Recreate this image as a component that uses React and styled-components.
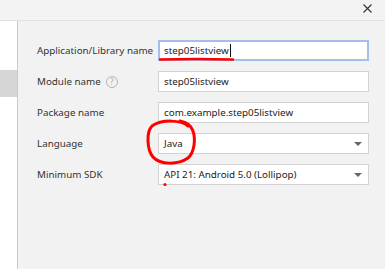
import { Fragment } from "react";
import styled, { createGlobalStyle } from "styled-components";

const Global = createGlobalStyle`
  html, body { margin: 0; padding: 0; }
  body {
    width: 385px;
    height: 269px;
    overflow: hidden;
    font-family: "Noto Sans", "Open Sans", sans-serif;
    color: #333;
  }
`;

const Window = styled.div`
  position: relative;
  width: 385px;
  height: 269px;
  display: flex;
  flex-direction: column;
  background: #f2f2f2;
`;

const TitleBar = styled.div`
  height: 20px;
  flex: none;
  display: flex;
  align-items: center;
  justify-content: flex-end;
  padding-right: 13px;
  background: #f3f3f3;
  border-bottom: 1px solid #e1e1e1;
`;

const CloseButton = styled.button`
  border: 0;
  padding: 0;
  background: none;
  width: 9px;
  height: 9px;
  margin-top: -3px;
  display: flex;
  svg { display: block; }
`;

const Body = styled.div`
  flex: 1;
  display: flex;
`;

const Sidebar = styled.div`
  width: 17px;
  flex: none;
  background: #fff;
  border-right: 1px solid #cacaca;
  padding-top: 49px;
`;

const SideItem = styled.div`
  height: 27px;
  background: ${({ $selected }) => ($selected ? "#d6d6d6" : "transparent")};
`;

const Content = styled.div`
  flex: 1;
  padding: 19px 0 0 19px;
`;

const Form = styled.div`
  display: grid;
  grid-template-columns: 121px 211px;
  grid-auto-rows: 21px;
  row-gap: 10px;
  align-items: center;
`;

const Label = styled.div`
  font-size: 9.8px;
  display: flex;
  align-items: center;
  gap: 5px;
  white-space: nowrap;
`;

const Help = styled.span`
  width: 10px;
  height: 10px;
  border-radius: 50%;
  border: 1px solid #b4b4b4;
  color: #a8a8a8;
  font-size: 8px;
  line-height: 10px;
  text-align: center;
`;

const Field = styled.div`
  box-sizing: border-box;
  height: 21px;
  display: flex;
  align-items: center;
  justify-content: space-between;
  background: #fff;
  border: ${({ $focused }) => ($focused ? "2px solid #a3bfea" : "1px solid #d3d3d3")};
  padding: 0 6px 0 ${({ $focused }) => ($focused ? "4px" : "5px")};
  font-size: 9.8px;
  color: #222;
`;

const Value = styled.span`
  display: flex;
  align-items: center;
`;

const Caret = styled.span`
  width: 1px;
  height: 13px;
  background: #111;
  margin-left: 1px;
`;

const Arrow = styled.span`
  width: 0;
  height: 0;
  border-left: 4px solid transparent;
  border-right: 4px solid transparent;
  border-top: 4px solid #666;
`;

const Marks = styled.svg`
  position: absolute;
  left: 0;
  top: 0;
  pointer-events: none;
`;

const rows = [
  { label: "Application/Library name", value: "step05listview", focused: true },
  { label: "Module name", value: "step05listview", help: true },
  { label: "Package name", value: "com.example.step05listview" },
  { label: "Language", value: "Java", select: true },
  { label: "Minimum SDK", value: "API 21: Android 5.0 (Lollipop)", select: true },
];

export default function App() {
  return (
    <Window>
      <Global />
      <TitleBar>
        <CloseButton aria-label="Close">
          <svg width="9" height="9" viewBox="0 0 9 9">
            <path d="M0.5 0.5L8.5 8.5M8.5 0.5L0.5 8.5" stroke="#333" strokeWidth="1.1" />
          </svg>
        </CloseButton>
      </TitleBar>
      <Body>
        <Sidebar>
          <SideItem $selected />
        </Sidebar>
        <Content>
          <Form>
            {rows.map((r) => (
              <Fragment key={r.label}>
                <Label>
                  {r.label}
                  {r.help && <Help>?</Help>}
                </Label>
                <Field $focused={r.focused}>
                  <Value>
                    {r.value}
                    {r.focused && <Caret />}
                  </Value>
                  {r.select && <Arrow />}
                </Field>
              </Fragment>
            ))}
          </Form>
        </Content>
      </Body>
      <Marks width="385" height="269" viewBox="0 0 385 269">
        <path d="M160 59.5 Q196 58.5 233 59.5" stroke="#f00" strokeWidth="2.4" fill="none" strokeLinecap="round" />
        <path
          d="M188 126 C181 120 162 119 152 126 C146 132 147 150 153 157 C160 165 178 165 188 158 C194 153 196 140 193 131 C191 125 186 122 180 121"
          stroke="#f00"
          strokeWidth="3"
          fill="none"
          strokeLinecap="round"
        />
        <circle cx="165" cy="184.5" r="1.6" fill="#f00" />
      </Marks>
    </Window>
  );
}
